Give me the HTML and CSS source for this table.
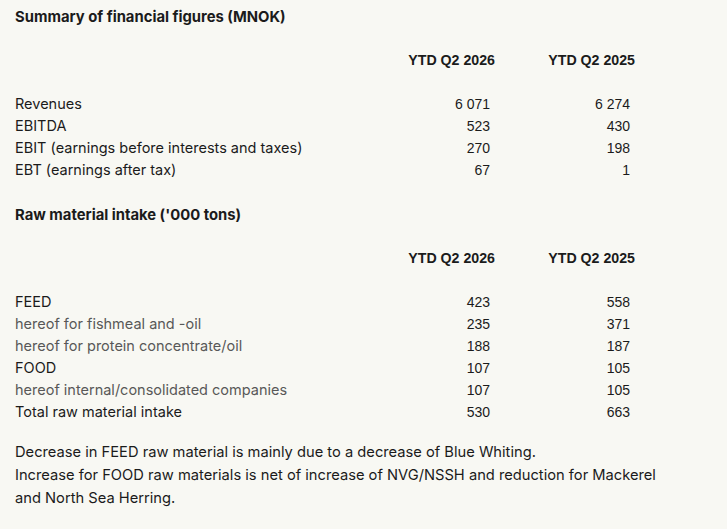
FILE: index.html
```html
<!DOCTYPE html>
<html lang="en">
<head>
<meta charset="utf-8">
<title>Summary of financial figures</title>
<link rel="stylesheet" href="styles.css">
</head>
<body>
<main class="page">
  <section class="block">
    <h2 class="block-title">Summary of financial figures (MNOK)</h2>
    <div class="grid head">
      <span></span><span class="col">YTD Q2 2026</span><span class="col">YTD Q2 2025</span>
    </div>
    <div class="grid rows">
      <span class="label">Revenues</span><span class="num">6 071</span><span class="num">6 274</span>
      <span class="label">EBITDA</span><span class="num">523</span><span class="num">430</span>
      <span class="label">EBIT (earnings before interests and taxes)</span><span class="num">270</span><span class="num">198</span>
      <span class="label">EBT (earnings after tax)</span><span class="num">67</span><span class="num">1</span>
    </div>
  </section>
  <section class="block">
    <h2 class="block-title">Raw material intake ('000 tons)</h2>
    <div class="grid head">
      <span></span><span class="col">YTD Q2 2026</span><span class="col">YTD Q2 2025</span>
    </div>
    <div class="grid rows">
      <span class="label">FEED</span><span class="num">423</span><span class="num">558</span>
      <span class="label sub">hereof for fishmeal and -oil</span><span class="num">235</span><span class="num">371</span>
      <span class="label sub">hereof for protein concentrate/oil</span><span class="num">188</span><span class="num">187</span>
      <span class="label">FOOD</span><span class="num">107</span><span class="num">105</span>
      <span class="label sub">hereof internal/consolidated companies</span><span class="num">107</span><span class="num">105</span>
      <span class="label">Total raw material intake</span><span class="num">530</span><span class="num">663</span>
    </div>
  </section>
  <p class="note">Decrease in FEED raw material is mainly due to a decrease of Blue Whiting.<br>Increase for FOOD raw materials is net of increase of NVG/NSSH and reduction for Mackerel and North Sea Herring.</p>
</main>
</body>
</html>
```
FILE: styles.css
```css
html, body {
  margin: 0;
  padding: 0;
  background: #f8f8f3;
}
body {
  color: #1b1b1b;
  font-family: "Inter", "Liberation Sans", sans-serif;
}
.page {
  padding: 6px 0 0 15px;
  width: 620px;
}
.block + .block {
  margin-top: 23px;
}
.block-title {
  margin: 0;
  font-size: 14.8px;
  font-weight: 700;
  line-height: 22px;
}
.grid {
  display: grid;
  grid-template-columns: 340px 140px 140px;
  line-height: 22px;
}
.head {
  margin-top: 21px;
  font-family: "Liberation Sans", Arial, sans-serif;
  font-weight: 700;
  font-size: 14.2px;
}
.col {
  text-align: right;
}
.rows {
  margin-top: 22px;
}
.label {
  font-size: 14.5px;
  white-space: nowrap;
}
.label.sub {
  color: #585858;
}
.num {
  font-family: "Liberation Sans", Arial, sans-serif;
  font-size: 14px;
  text-align: right;
  padding-right: 5px;
}
.note {
  margin: 18px 0 0;
  width: 660px;
  font-size: 14.7px;
  line-height: 23px;
}
```
